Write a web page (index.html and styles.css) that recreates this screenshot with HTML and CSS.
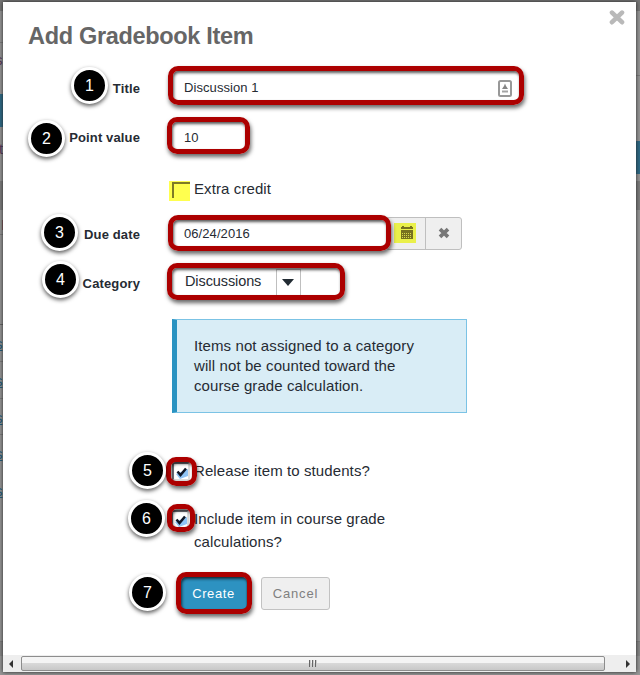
FILE: index.html
```html
<!DOCTYPE html>
<html lang="en">
<head>
<meta charset="utf-8">
<title>Add Gradebook Item</title>
<link rel="stylesheet" href="styles.css">
</head>
<body>
<div class="backdrop">
  <i class="band band-top"></i><i class="band band-blue-l"></i><i class="band band-blue-r"></i><i class="band band-row"></i><i class="band band-foot"></i>
  <i class="rule r1"></i><i class="rule r2"></i><i class="rule r3"></i><i class="rule r4"></i><i class="rule r5"></i><i class="rule r6"></i><i class="rule r7"></i><i class="rule r8"></i>
  <span class="peek purple p1">s</span><span class="peek purple p2">t</span><span class="peek purple p3">I</span>
  <span class="peek link p4">s</span><span class="peek link p5">s</span><span class="peek link p6">s</span><span class="peek link p7">s</span><span class="peek link p8">s</span>
</div>
<main class="modal">
  <header class="head">
    <h1>Add Gradebook Item</h1>
    <svg class="close" viewBox="0 0 16 15" width="16" height="15"><path d="M3 2.600 13 12.200M13 2.600 3 12.200" stroke="#b9b9b9" stroke-width="4.600" stroke-linecap="round"/></svg>
  </header>
  <form class="form">
    <div class="row row-title">
      <span class="badge b1">1</span>
      <label>Title</label>
      <div class="field"><span class="value">Discussion 1</span>
        <svg class="card" viewBox="0 0 14 17" width="14" height="17"><rect x="1" y="1" width="12" height="15" rx="1.500" fill="#fff" stroke="#989898" stroke-width="2"/><path d="M7 3.500 8 6 10 9H4l2-3z" fill="#858585"/><path d="M4 11.500h6" stroke="#a4a4a4" stroke-width="2"/></svg>
      </div>
      <i class="ring g1"></i>
    </div>
    <div class="row row-points">
      <span class="badge b2">2</span>
      <label>Point value</label>
      <div class="field"><span class="value">10</span></div>
      <i class="ring g2"></i>
    </div>
    <div class="row row-extra">
      <label></label>
      <div class="field"><span class="marked"><i></i></span><span class="text">Extra credit</span></div>
    </div>
    <div class="row row-date">
      <span class="badge b3">3</span>
      <label>Due date</label>
      <div class="field"><span class="value">06/24/2016</span>
        <div class="addons">
          <span class="addon cal"><span class="hl"><svg viewBox="0 0 12 13" width="12" height="13"><path d="M1 0h2v1h6V0h2v1h1v2H0V1h1zM0 4h12v9H0z" fill="#77711f"/><path d="M1 7.500h10M1 9.500h10M1 11.500h10" stroke="#d9d84c" stroke-dasharray="1 1"/></svg></span></span>
          <span class="addon clear"><svg viewBox="0 0 12 12" width="12" height="12"><path d="M2 2.200 10 9.800M10 2.200 2 9.800" stroke="#777" stroke-width="3.700"/></svg></span>
        </div>
      </div>
      <i class="ring g3"></i>
    </div>
    <div class="row row-category">
      <span class="badge b4">4</span>
      <label>Category</label>
      <div class="field"><span class="text">Discussions</span><span class="drop"><svg viewBox="0 0 12 7" width="12" height="7"><path d="M0 0h12L6 7z" fill="#222b33"/></svg></span></div>
      <i class="ring g4"></i>
    </div>
    <p class="note">Items not assigned to a category<br>will not be counted toward the<br>course grade calculation.</p>
    <div class="check c1">
      <span class="badge b5">5</span>
      <span class="box"><svg viewBox="0 0 16 16" width="16" height="16"><path d="M2 10 6 15 14 12V5" fill="#8fc4f5"/><path d="M3.500 7.500 6.500 11 12 4.500" fill="none" stroke="#101828" stroke-width="2.500"/></svg></span>
      <span class="text">Release item to students?</span>
      <i class="ring g5"></i>
    </div>
    <div class="check c2">
      <span class="badge b6">6</span>
      <span class="box"><svg viewBox="0 0 16 16" width="16" height="16"><path d="M2 10 6 15 14 12V5" fill="#8fc4f5"/><path d="M3.500 7.500 6.500 11 12 4.500" fill="none" stroke="#101828" stroke-width="2.500"/></svg></span>
      <span class="text">Include item in course grade<br>calculations?</span>
      <i class="ring g6"></i>
    </div>
    <div class="actions">
      <span class="badge b7">7</span>
      <button type="button" class="btn primary">Create</button>
      <button type="button" class="btn">Cancel</button>
      <i class="ring g7"></i>
    </div>
  </form>
  <div class="scroll">
    <svg viewBox="0 0 4 8" width="4" height="8"><path d="M4 0v8L0 4z" fill="#333"/></svg>
    <div class="thumb"><i></i><i></i><i></i></div>
    <svg viewBox="0 0 4 8" width="4" height="8"><path d="M0 0v8l4-4z" fill="#333"/></svg>
  </div>
</main>
</body>
</html>
```

FILE: styles.css
```css
* { box-sizing: border-box; }
html, body { margin: 0; height: 675px; overflow: hidden; }
body { padding: 2px 4px 3px 3px; background: #969696; font-family: "Liberation Sans", Arial, sans-serif; color: #262b33; position: relative; }

/* Dimmed page seen around the dialog */
.backdrop { position: absolute; inset: 0; overflow: hidden; }
.band, .rule { position: absolute; left: 0; right: 0; }
.band-top { top: 0; height: 11px; background: #777; }
.band-blue-l { top: 94px; height: 33px; right: 320px; background: #2d6a86; }
.band-blue-r { top: 141px; height: 33px; left: 320px; background: #2d6a86; }
.band-row { top: 181px; height: 29px; background: #7d7d7d; }
.band-foot { top: 642px; height: 14px; background: #878787; }
.rule { height: 1px; background: #7c7c7c; }
.r1 { top: 42px; right: 320px; } .r2 { top: 75px; left: 320px; } .r3 { top: 234px; right: 320px; } .r4 { top: 324px; right: 320px; background: #666; }
.r5 { top: 361px; right: 320px; } .r6 { top: 398px; right: 320px; } .r7 { top: 434px; right: 320px; } .r8 { top: 641px; }
.peek { position: absolute; left: -5px; font-size: 15px; line-height: 16px; }
.purple { color: #573858; } .link { color: #1d5c7c; text-decoration: underline; }
.p1 { top: 52px; } .p2 { top: 141px; left: -1px; } .p3 { top: 217px; left: 1px; }
.p4 { top: 336px; } .p5 { top: 373px; } .p6 { top: 410px; } .p7 { top: 446px; } .p8 { top: 483px; }

.modal { position: relative; width: 633px; height: 670px; background: #fff; display: flex; flex-direction: column; box-shadow: 0 0 4px #222; }
.head { height: 62px; padding: 8px 11px 0 25px; display: flex; justify-content: space-between; align-items: flex-start; }
h1 { margin: 12px 0 0; font-size: 23.500px; letter-spacing: -.32px; line-height: 28px; color: #666; white-space: nowrap; }
.form { flex: 1; }
.row { position: relative; display: flex; align-items: center; }
.row-title { height: 48px; }
.row-points { height: 50px; }
.row-extra { height: 50px; }
.row-date { height: 44px; }
.row-category { height: 52px; }
label { width: 137px; text-align: right; font-weight: bold; font-size: 13px; letter-spacing: .13px; flex: none; }
.row-points label { padding-top: 1px; }
.row-category label { padding-top: 3px; }
.field { flex: 1; display: flex; align-items: center; padding-left: 44px; height: 36px; }
.value { font-size: 13px; letter-spacing: .08px; width: 314px; padding-bottom: 2px; }
.row-points .value { padding-bottom: 0; }
.text { font-size: 15px; letter-spacing: .1px; white-space: nowrap; }
.row-extra .field { padding-left: 29px; gap: 4px; }
.row-extra .text { margin-top: 3px; }
.marked { width: 21px; height: 20px; background: #ffff4f; padding: 1px 0 0 3px; margin-top: 7px; }
.marked i { display: block; width: 18px; height: 16px; border-top: 2px solid #7f7b26; border-left: 2px solid #7f7b26; }
.row-date .value { width: 202px; }
.addons { display: flex; height: 33px; border: 1px solid #bfbfbf; border-radius: 3px; background: #efefef; width: 76px; margin-top: -1px; }
.addon { display: flex; align-items: center; justify-content: center; }
.cal { width: 39px; border-right: 1px solid #bfbfbf; }
.clear { flex: 1; padding-bottom: 2px; }
.hl { width: 22px; height: 20px; margin-left: -2px; margin-bottom: 2px; background: #eaf04a; display: flex; align-items: center; justify-content: center; padding-left: 4px; }
.hl svg { flex: none; }
.row-category .field { padding-left: 45px; }
.row-category .text { width: 91px; font-size: 14.500px; letter-spacing: -.1px; padding-bottom: 2px; }
.drop { width: 25px; height: 27px; border: solid #bfbfbf; border-width: 1px 1px 0 1px; display: flex; align-items: center; justify-content: center; padding-right: 2px; }

.note { margin: 11px 0 0 169px; width: 295px; height: 94px; padding: 16px 0 0 17px; border: 1px solid #7bc3e5; border-left: 5px solid #2a93c1; background: #d9edf6; font-size: 15px; letter-spacing: .1px; line-height: 20px; }
.check { position: relative; display: flex; padding-left: 169px; line-height: 23px; }
.c1 { margin-top: 46px; height: 48px; }
.c2 { height: 70px; }
.box { width: 18px; height: 19px; margin: 3px 4px 0 0; border: 2px solid #73737b; border-right-color: #ddd; border-bottom-color: #ddd; background: #fff; flex: none; }
.box svg { display: block; }
.c2 .box { margin-left: -1px; margin-right: 5px; }
.actions { position: relative; display: flex; padding-left: 176px; gap: 12px; }
.btn { height: 33px; width: 69px; border: 1px solid #c2c2c2; border-radius: 3px; background: #efefef; color: #808080; font: 13px "Liberation Sans", Arial, sans-serif; letter-spacing: .8px; padding: 0; }
.primary { width: 67px; margin-left: 1px; margin-right: 2px; border-color: #2a82a9; background: #2d92c1; color: #fff; letter-spacing: .6px; }

/* Numbered step markers and highlight rings over the form */
.badge { position: absolute; z-index: 3; width: 37px; height: 37px; border: 3px solid #fff; border-radius: 50%; background: #000; color: #fff; font-size: 16px; line-height: 31px; text-align: center; box-shadow: 0 2px 4px rgba(0,0,0,.65); }
.ring { position: absolute; z-index: 2; border: 5px solid #ac0000; border-radius: 10px; box-shadow: 1px 3px 4px rgba(0,0,0,.6), inset 1px 2px 3px rgba(0,0,0,.65); }
.b1 { left: 68px; top: 3px; } .b2 { left: 25px; top: 8px; } .b3 { left: 38px; top: 2px; } .b4 { left: 39px; top: 5px; }
.b5 { left: 126px; top: -7px; } .b6 { left: 125px; top: -7px; } .b7 { left: 126px; top: -3px; }
.g1 { left: 165px; top: 2px; width: 356px; height: 39px; }
.g2 { left: 164px; top: 5px; width: 83px; height: 37px; }
.g3 { left: 165px; top: 3px; width: 223px; height: 36px; }
.g4 { left: 164px; top: 7px; width: 178px; height: 37px; }
.g5 { left: 163px; top: -2px; width: 31px; height: 29px; }
.g6 { left: 164px; top: -3px; width: 28px; height: 28px; }
.g7 { left: 173px; top: -5px; width: 76px; height: 42px; }

.scroll { height: 17px; display: flex; align-items: center; justify-content: space-between; padding: 0 6px; background: #eee; }
.thumb { width: 584px; height: 15px; margin-left: 4px; margin-right: 17px; display: flex; align-items: center; justify-content: center; gap: 1px; border: 1px solid #8d8d8d; border-radius: 2px; background: linear-gradient(#f4f4f4 45%, #d8d8d8 50%, #c8c8c8); }
.thumb i { width: 2px; height: 7px; background: #666; border-right: 1px solid #ccc; }
```
